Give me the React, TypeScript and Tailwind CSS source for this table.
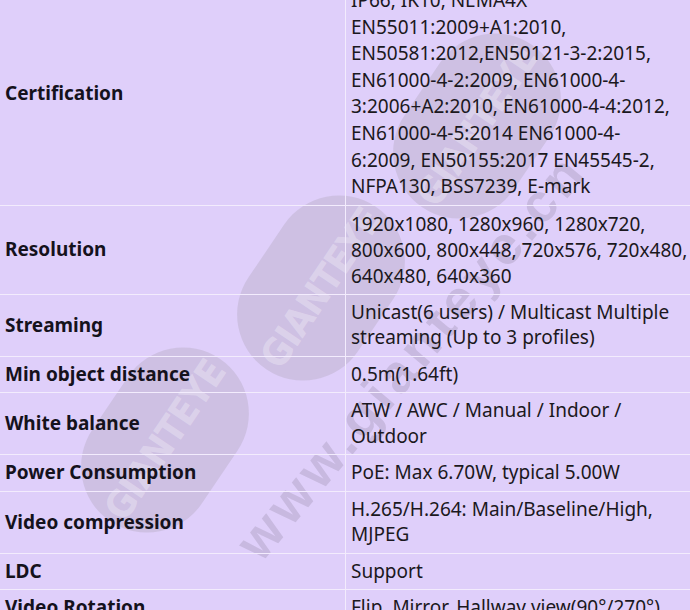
const rows: { label: string; lines: string[]; lh: string }[] = [
  {
    label: 'Certification',
    lh: 'leading-[26.6px]',
    lines: [
      'IP66, IK10, NEMA4X',
      'EN55011:2009+A1:2010,',
      'EN50581:2012,EN50121-3-2:2015,',
      'EN61000-4-2:2009, EN61000-4-',
      '3:2006+A2:2010, EN61000-4-4:2012,',
      'EN61000-4-5:2014 EN61000-4-',
      '6:2009, EN50155:2017 EN45545-2,',
      'NFPA130, BSS7239, E-mark',
    ],
  },
  {
    label: 'Resolution',
    lh: 'leading-[26px]',
    lines: ['1920x1080, 1280x960, 1280x720,', '800x600, 800x448, 720x576, 720x480,', '640x480, 640x360'],
  },
  { label: 'Streaming', lh: 'leading-[25.5px]', lines: ['Unicast(6 users) / Multicast Multiple', 'streaming (Up to 3 profiles)'] },
  { label: 'Min object distance', lh: 'leading-[25.5px]', lines: ['0.5m(1.64ft)'] },
  { label: 'White balance', lh: 'leading-[25.5px]', lines: ['ATW / AWC / Manual / Indoor /', 'Outdoor'] },
  { label: 'Power Consumption', lh: 'leading-[25.5px]', lines: ['PoE: Max 6.70W, typical 5.00W'] },
  { label: 'Video compression', lh: 'leading-[25.5px]', lines: ['H.265/H.264: Main/Baseline/High,', 'MJPEG'] },
  { label: 'LDC', lh: 'leading-[25.5px]', lines: ['Support'] },
  { label: 'Video Rotation', lh: 'leading-[25.5px]', lines: ['Flip, Mirror, Hallway view(90°/270°)'] },
];

// watermark stamp, sits behind the table
function Badge({ className }: { className: string }) {
  return (
    <div
      className={`absolute flex h-[132px] w-[196px] items-center justify-center overflow-hidden rounded-full bg-[#676b5a]/14 rotate-[-56deg] ${className}`}
    >
      <span className="font-['DejaVu_Sans_Condensed','Liberation_Sans',sans-serif] text-[38px] font-bold tracking-tight text-white/30">
        GIANTEYE
      </span>
    </div>
  );
}

function Watermark() {
  return (
    <div className="pointer-events-none absolute inset-0">
      <Badge className="left-[223px] top-[222px]" />
      <Badge className="left-[67px] top-[374px]" />
      <Badge className="left-[379px] top-[60px]" />
      <div className="absolute left-[411px] top-[356px] -translate-x-1/2 -translate-y-1/2 rotate-[-50deg] whitespace-nowrap font-['Liberation_Sans',sans-serif] text-[54px] font-bold tracking-[5px] text-[#6e6478]/20">
        www.gianteye.cn
      </div>
    </div>
  );
}

export default function App() {
  return (
    <div className="relative h-[610px] w-[690px] overflow-hidden bg-[#dfcffa] font-['Noto_Sans',sans-serif] text-[19px] text-[#1b1820]">
      <Watermark />
      <div className="relative -mt-[18px]">
        {rows.map((r) => (
          <div key={r.label} className="grid grid-cols-[346px_1fr] border-b border-[#f3ecfd]">
            <div className="flex items-center border-r border-[#f3ecfd] px-[5px] py-[5px] font-bold leading-[25.5px] text-[#15121c]">
              {r.label}
            </div>
            <div className={`whitespace-nowrap px-[5px] py-[5px] ${r.lh}`}>
              {r.lines.map((l) => (
                <div key={l}>{l}</div>
              ))}
            </div>
          </div>
        ))}
      </div>
    </div>
  );
}
